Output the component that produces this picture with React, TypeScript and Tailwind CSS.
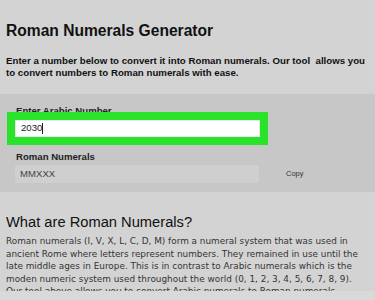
import React from "react";

export default function App() {
  const arial = { fontFamily: '"Liberation Sans", Arial, sans-serif' };
  return (
    <div className="w-[375px] h-[300px] overflow-hidden bg-[#d3d3d3] relative" style={arial}>
      <div className="px-[6px] pt-[22px]">
        <h1 className="text-[15.6px] leading-[18px] font-bold text-[#111]">Roman Numerals Generator</h1>
        <p className="mt-[15px] text-[9.7px] leading-[12px] font-bold text-[#111] whitespace-nowrap">
          Enter a number below to convert it into Roman numerals. Our tool&nbsp; allows you
          <br />
          to convert numbers to Roman numerals with ease.
        </p>
      </div>
      <div className="mt-[15px] h-[98px] bg-[#c7c7c7] pt-[11px]">
        <div className="pl-[16px] text-[9.6px] leading-[11px] font-bold text-[#222]">Enter Arabic Number</div>
        <div className="relative -mt-[4px] ml-[7px] w-[261px] h-[33px] border-[8px] border-[#2ae22a] bg-white">
          <div className="h-full flex items-center pl-[5px] text-[9.6px] text-[#222] border border-[#e6e6e6]">
            2030<span className="inline-block w-px h-[11px] bg-[#222]"></span>
          </div>
        </div>
        <div className="mt-[6px] pl-[16px] text-[9.6px] leading-[11px] font-bold text-[#222]">Roman Numerals</div>
        <div className="mt-[3px] flex items-center">
          <div className="ml-[15px] w-[244px] h-[18px] rounded-[2px] bg-[#cfcfcf] flex items-center pl-[5px] text-[9.6px] text-[#444]">
            MMXXX
          </div>
          <div className="ml-[27px] text-[7.5px] text-[#333]">Copy</div>
        </div>
      </div>
      <div className="px-[6px] pt-[22px]">
        <h2 className="text-[14.7px] leading-[17px] text-[#111]">What are Roman Numerals?</h2>
        <p
          className="mt-[4px] text-[8.9px] leading-[12.5px] text-[#333] whitespace-nowrap"
          style={{ fontFamily: '"DejaVu Sans", Verdana, sans-serif' }}
        >
          Roman numerals (I, V, X, L, C, D, M) form a numeral system that was used in
          <br />
          ancient Rome where letters represent numbers. They remained in use until the
          <br />
          late middle ages in Europe. This is in contrast to Arabic numerals which is the
          <br />
          moden numeric system used throughout the world (0, 1, 2, 3, 4, 5, 6, 7, 8, 9).
          <br />
          Our tool above allows you to convert Arabic numerals to Roman numerals.
        </p>
      </div>
      <div className="absolute left-0 right-0 top-[291px] h-[9px] bg-[#d9d9d9]"></div>
    </div>
  );
}
